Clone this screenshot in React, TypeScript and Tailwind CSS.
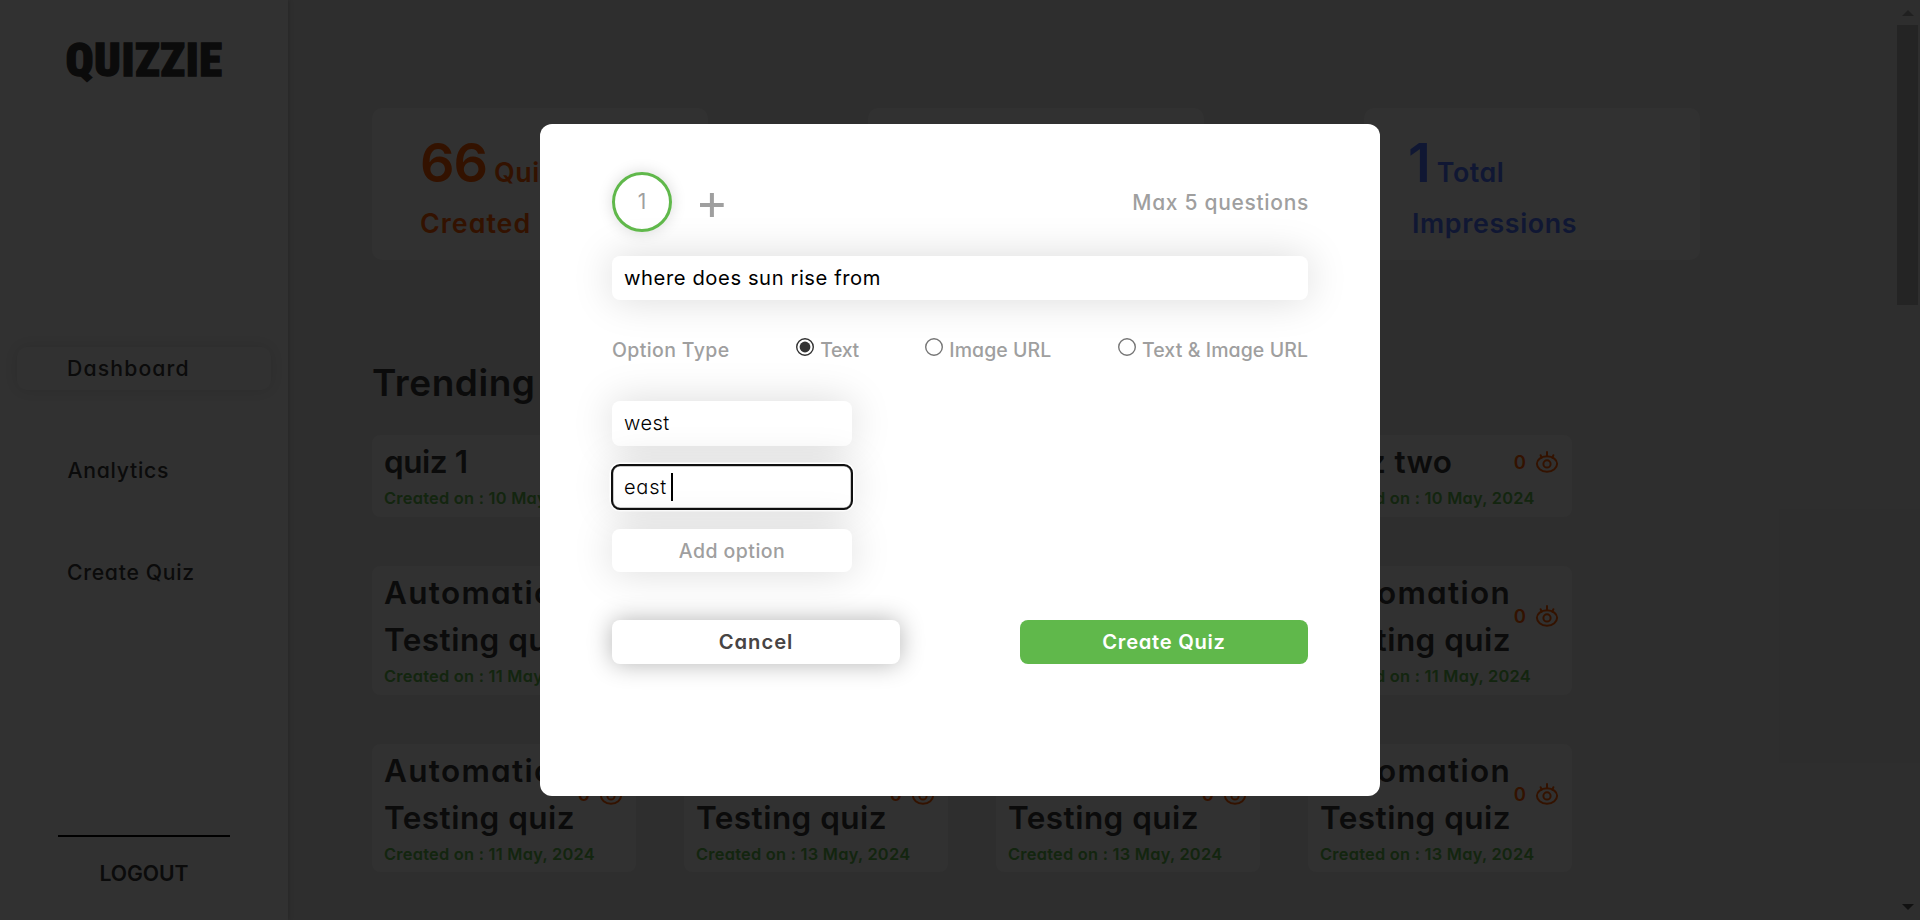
type Title = { text: string; tracking: string };
type Quiz = { lines: Title[]; date: string };

const auto: Title[] = [
  { text: "Automation", tracking: "tracking-[1.3px]" },
  { text: "Testing quiz", tracking: "tracking-[0.45px]" },
];
const quizRows: Quiz[][] = [
  [
    { lines: [{ text: "quiz 1", tracking: "tracking-[-0.46px]" }], date: "10 May, 2024" },
    { lines: [{ text: "quiz 2", tracking: "tracking-[-0.46px]" }], date: "10 May, 2024" },
    { lines: [{ text: "quiz one", tracking: "tracking-[0.31px]" }], date: "10 May, 2024" },
    { lines: [{ text: "quiz two", tracking: "tracking-[0.31px]" }], date: "10 May, 2024" },
  ],
  [
    { lines: auto, date: "11 May, 2024" },
    { lines: auto, date: "11 May, 2024" },
    { lines: auto, date: "11 May, 2024" },
    { lines: auto, date: "11 May, 2024" },
  ],
  [
    { lines: auto, date: "11 May, 2024" },
    { lines: auto, date: "13 May, 2024" },
    { lines: auto, date: "13 May, 2024" },
    { lines: auto, date: "13 May, 2024" },
  ],
];

function EyeIcon() {
  return (
    <svg width="24" height="24" viewBox="0 0 24 24" fill="none" stroke="currentColor" strokeWidth="2" strokeLinecap="round" strokeLinejoin="round">
      <path d="M1.9 13.8C1.9 10 6 6.300 12 6.300s10.1 3.700 10.1 7.500S18 21.700 12 21.700 1.900 17.600 1.900 13.800Z" />
      <circle cx="12" cy="13.900" r="3.600" />
      <path d="M12 6.300V2M6.600 7.700 5.600 5.200M17.400 7.700l1-2.500" />
    </svg>
  );
}

function QuizCard({ quiz }: { quiz: Quiz }) {
  return (
    <div className="w-[264px] rounded-[8px] bg-[#f3f3f3] pb-1 pl-3 pr-[13px] pt-[3px]">
      <div className="flex items-center justify-between">
        <div className="text-[31.5px] font-semibold leading-[47.25px] text-[#3a3a3a]">
          {quiz.lines.map((line) => (
            <div key={line.text} className={`whitespace-nowrap ${line.tracking}`}>
              {line.text}
            </div>
          ))}
        </div>
        <div className="flex items-center gap-[9px] text-[#ff5d01]">
          <span className="text-[18.5px] font-semibold leading-6">0</span>
          <EyeIcon />
        </div>
      </div>
      <div className="whitespace-nowrap text-[16.4px] font-semibold leading-[27.4px] tracking-[0.25px] text-[#60b84b]">
        Created on : {quiz.date}
      </div>
    </div>
  );
}

type StatProps = { value: string; unit: string; label: string; color: string; valueTracking: string };

function StatCard({ value, unit, label, color, valueTracking }: StatProps) {
  return (
    <div className={`h-[152px] w-[336px] rounded-[10px] bg-[#f3f3f3] pl-12 pt-[19px] font-semibold ${color}`}>
      <div className="flex items-baseline gap-[7px]">
        <span className={`text-[54px] leading-[72px] ${valueTracking}`}>{value}</span>
        <span className="text-[26.8px] leading-none tracking-[0.54px]">{unit}</span>
      </div>
      <div className={`text-[26.8px] leading-[48px] ${label === "Created" ? "tracking-[1.01px]" : "tracking-[0.65px]"}`}>{label}</div>
    </div>
  );
}

function Sidebar() {
  return (
    <aside className="z-10 flex h-full w-72 shrink-0 flex-col bg-[#f3f3f3] text-[#3a3a3a] shadow-[0_0_5px_rgba(0,0,0,0.25)]">
      <div className="mt-[30px] pl-[65.5px] font-['Roboto'] text-[46.5px] font-black leading-[60px] tracking-[0.5px] [-webkit-text-stroke:1.3px_#3a3a3a] [font-stretch:81%]">
        QUIZZIE
      </div>
      <nav className="mt-[257px] flex flex-col gap-[59.5px] px-[17px] text-[21.2px] font-[550] leading-[42.5px]">
        <a className="rounded-[10px] pl-[50px] tracking-[1.15px] shadow-[0_0_15px_rgba(0,0,0,0.12)]">Dashboard</a>
        <a className="pl-[50.5px] tracking-[0.72px]">Analytics</a>
        <a className="pl-[50px] tracking-[0.7px]">Create Quiz</a>
      </nav>
      <div className="mb-[27px] mt-auto flex flex-col items-center">
        <div className="h-0.5 w-[172px] bg-black" />
        <div className="mt-[17px] text-[21.2px] font-semibold leading-[39px] tracking-[-0.08px]">LOGOUT</div>
      </div>
    </aside>
  );
}

function Scrollbar() {
  return (
    <div className="flex h-full w-[25px] flex-col items-center">
      <svg className="mt-[10px] shrink-0" width="12" height="6" viewBox="0 0 12 6" fill="#a0a0a0">
        <path d="M0 6 6 0l6 6Z" />
      </svg>
      <div className="mt-[9px] h-[280px] w-[21px] bg-[#b4b4b4]" />
      <svg className="mb-[10px] mt-auto shrink-0" width="12" height="6" viewBox="0 0 12 6" fill="#555">
        <path d="M0 0h12L6 6Z" />
      </svg>
    </div>
  );
}

function Radio({ label, checked, tracking }: { label: string; checked?: boolean; tracking: string }) {
  return (
    <label className="flex gap-1.5">
      <svg className="mt-[1.5px]" width="18" height="18" viewBox="0 0 18 18" fill="none">
        <circle cx="9" cy="9" r="8.3" stroke={checked ? "#333" : "#767676"} strokeWidth="1.4" />
        {checked && <circle cx="9" cy="9" r="5.4" fill="#333" />}
      </svg>
      <span className={tracking}>{label}</span>
    </label>
  );
}

function QuestionModal() {
  return (
    <div className="h-[672px] w-[840px] rounded-[12px] bg-white px-[72px] pt-12 text-[#9f9f9f]">
      <div className="flex h-[60px] items-center">
        <div className="flex size-[60px] items-center justify-center rounded-full border-[3px] border-[#60b84b] text-[21px] shadow-[0_0_15px_rgba(0,0,0,0.15)]">
          1
        </div>
        <svg className="ml-7 mt-1.5" width="24" height="24" viewBox="0 0 24 24" fill="#9f9f9f">
          <path d="M9.9 0h4v10h9.800v4h-9.800v10h-4V14H0v-4h9.900Z" />
        </svg>
        <div className="-mr-px ml-auto pt-px text-[21px] font-medium tracking-[0.69px]">Max 5 questions</div>
      </div>
      <div className="mt-6 h-11 rounded-[8px] bg-white px-3 text-[20.2px] leading-[43px] tracking-[0.58px] text-black shadow-[0_0_40px_rgba(0,0,0,0.15)]">
        where does sun rise from
      </div>
      <div className="mt-9 flex justify-between text-[19.5px] font-medium leading-7">
        <span className="tracking-[0.37px]">Option Type</span>
        <Radio label="Text" checked tracking="tracking-[-0.4px]" />
        <Radio label="Image URL" tracking="tracking-[0.05px]" />
        <Radio label="Text & Image URL" tracking="tracking-[0.08px]" />
      </div>
      <div className="mt-[37px] flex w-60 flex-col text-[20px] font-[350] text-black">
        <div className="h-[45px] rounded-[8px] bg-white px-3 leading-[45px] tracking-[0.5px] shadow-[0_0_40px_rgba(0,0,0,0.15)]">west</div>
        <div className="mt-[19px] flex h-11 items-center rounded-[8px] bg-white px-3 tracking-[0.75px] shadow-[0_0_0_2.5px_#fff,0_0_40px_rgba(0,0,0,0.15),inset_0_0_0_1.5px_#999] outline-2 -outline-offset-1 outline-[#101010]">
          east
          <span className="ml-1 h-7 w-0.5 bg-black" />
        </div>
        <button className="mt-5 h-[43px] rounded-[8px] bg-white text-[19.5px] font-medium leading-[42px] tracking-[0.44px] text-[#9f9f9f] shadow-[0_0_40px_rgba(0,0,0,0.15)]">
          Add option
        </button>
      </div>
      <div className="mt-12 flex justify-between text-[20.2px] font-semibold leading-[43px]">
        <button className="h-11 w-72 rounded-[8px] bg-white pb-px tracking-[0.96px] text-[#474444] shadow-[0_0_25px_rgba(0,0,0,0.3)]">Cancel</button>
        <button className="h-11 w-72 rounded-[8px] bg-[#60b84b] pb-px tracking-[0.71px] text-white">Create Quiz</button>
      </div>
    </div>
  );
}

export default function App() {
  return (
    <div className="relative h-[920px] w-[1920px] overflow-hidden bg-[#e3e3e3] font-['Inter',sans-serif] [font-feature-settings:'cv11']">
      <div className="flex h-full">
        <Sidebar />
        <main className="flex-1 pl-[84px] pt-[108px]">
          <div className="flex gap-40">
            <StatCard value="66" unit="Quizzes" label="Created" color="text-[#ff5d01]" valueTracking="tracking-[-1px]" />
            <StatCard value="110" unit="Questions" label="Created" color="text-[#60b84b]" valueTracking="tracking-[-1px]" />
            <StatCard value="1" unit="Total" label="Impressions" color="text-[#5076ff]" valueTracking="-ml-1 tracking-[-1px]" />
          </div>
          <h2 className="mt-24 text-[37px] font-semibold leading-[53px] tracking-[0.53px] text-[#3a3a3a]">Trending Quizs</h2>
          <div className="mt-[26px] flex flex-col gap-[49px]">
            {quizRows.map((row, i) => (
              <div key={i} className="flex gap-12">
                {row.map((quiz, j) => (
                  <QuizCard key={j} quiz={quiz} />
                ))}
              </div>
            ))}
          </div>
        </main>
        <Scrollbar />
      </div>
      <div className="absolute inset-0 z-20 flex items-center justify-center bg-black/80">
        <QuestionModal />
      </div>
    </div>
  );
}
